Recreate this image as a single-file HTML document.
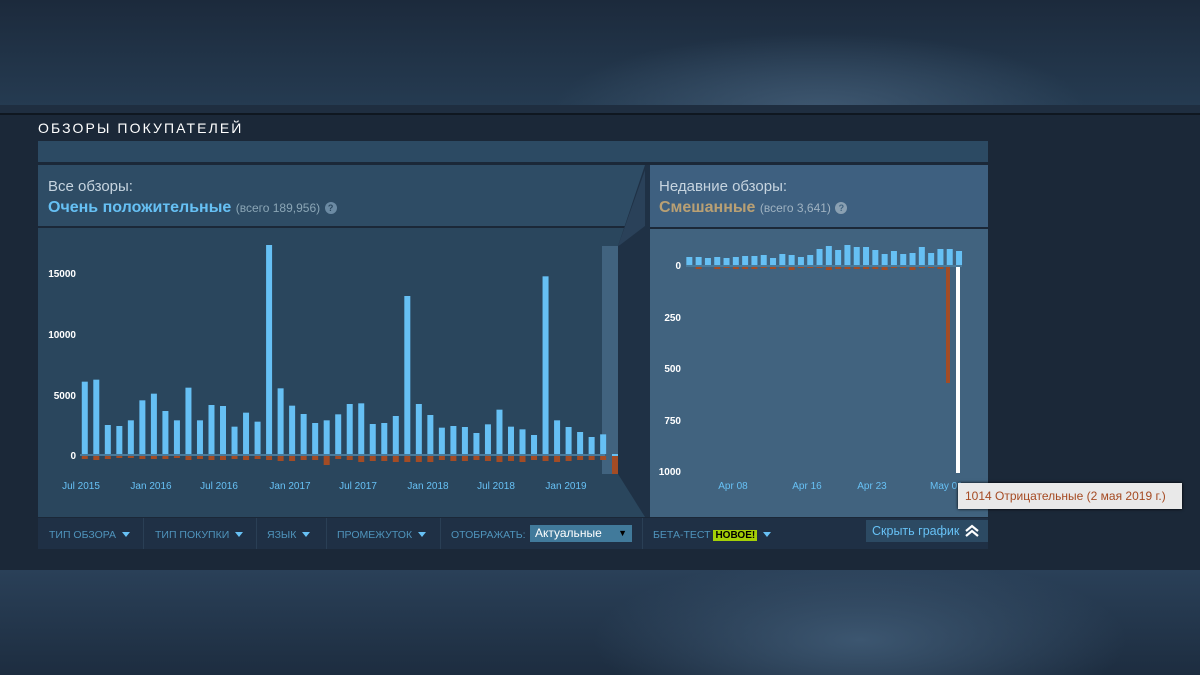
<!DOCTYPE html>
<html><head><meta charset="utf-8"><style>
*{margin:0;padding:0;box-sizing:border-box}
body{width:1200px;height:675px;overflow:hidden;background:#1b2838;font-family:"Liberation Sans",Arial,sans-serif;position:relative}
.a{position:absolute}
#top{left:0;top:0;width:1200px;height:105px;background:radial-gradient(ellipse 380px 110px at 820px 110px,#3e5770,rgba(40,60,80,0) 70%),linear-gradient(180deg,#1c2a3c,#253b51)}
#bot{left:0;top:570px;width:1200px;height:105px;background:radial-gradient(ellipse 380px 120px at 860px 70px,#3c5670,rgba(40,60,80,0) 70%),linear-gradient(180deg,#2a4058,#1d2d40)}
.t{color:#fff;font-size:14px;letter-spacing:2.1px}
.lbl{color:#c6d4df;font-size:15px}
.sm{font-size:12px;color:#8ba6b6}
.q{display:inline-block;width:12px;height:12px;border-radius:50%;background:#6b8aa3;color:#2a475e;font-size:9px;font-weight:bold;text-align:center;line-height:12px;vertical-align:1px}
.f{color:#4f94bc;font-size:10.5px;top:529px}
.tri{display:inline-block;width:0;height:0;border-left:4px solid transparent;border-right:4px solid transparent;border-top:5px solid #67c1f5;margin-left:6px;vertical-align:1px}
.sep{top:518px;width:1px;height:31px;background:#2a3f55}
</style></head><body>
<div class="a" id="top"></div>
<div class="a" style="left:0;top:105px;width:1200px;height:9px;background:#1f2e40"></div>
<div class="a" style="left:0;top:113px;width:1200px;height:2px;background:#0f1720"></div>
<div class="a" id="bot"></div>
<div class="a t" style="left:38px;top:120px">ОБЗОРЫ ПОКУПАТЕЛЕЙ</div>
<div class="a" style="left:38px;top:141px;width:950px;height:21px;background:#2c4a63"></div>
<div class="a" style="left:38px;top:165px;width:607px;height:61px;background:#2e4c65"></div>
<div class="a" style="left:38px;top:228px;width:607px;height:289px;background:#2a465d"></div>
<div class="a lbl" style="left:48px;top:178px">Все обзоры:</div>
<div class="a" style="left:48px;top:199px;font-size:16px;font-weight:bold;color:#66c0f4">Очень положительные <span class="sm" style="font-weight:normal">(всего 189,956)</span> <span class="q">?</span></div>
<div class="a" style="left:650px;top:165px;width:338px;height:62px;background:#3e6080"></div>
<div class="a" style="left:650px;top:229px;width:338px;height:288px;background:#41637f"></div>
<div class="a lbl" style="left:659px;top:178px">Недавние обзоры:</div>
<div class="a" style="left:659px;top:199px;font-size:16px;font-weight:bold;color:#b9a074">Смешанные <span class="sm" style="font-weight:normal;color:#9fb2c1">(всего 3,641)</span> <span class="q" style="background:#8aa0b2;color:#41637f">?</span></div>
<svg class="a" style="left:0;top:0" width="1200" height="675">
<polygon points="645,165 650,165 650,517 645,517 618,474 618,246" fill="#1f3145"/>
<polygon points="618,246 645,170 645,226 620,245" fill="#2a4159"/>
<rect x="602" y="246" width="16" height="228" fill="#41637f"/>
<g id="lb"></g><g id="rb"></g>
<g font-family="Liberation Sans,Arial" font-size="10" fill="#fff" font-weight="bold">
<text x="76" y="277" text-anchor="end">15000</text>
<text x="76" y="338" text-anchor="end">10000</text>
<text x="76" y="399" text-anchor="end">5000</text>
<text x="76" y="459" text-anchor="end">0</text>
<text x="681" y="269" text-anchor="end">0</text>
<text x="681" y="321" text-anchor="end">250</text>
<text x="681" y="372" text-anchor="end">500</text>
<text x="681" y="424" text-anchor="end">750</text>
<text x="681" y="475" text-anchor="end">1000</text>
</g>
<g font-family="Liberation Sans,Arial" font-size="10" fill="#67c1f5">
<text x="81" y="489" text-anchor="middle">Jul 2015</text>
<text x="151" y="489" text-anchor="middle">Jan 2016</text>
<text x="219" y="489" text-anchor="middle">Jul 2016</text>
<text x="290" y="489" text-anchor="middle">Jan 2017</text>
<text x="358" y="489" text-anchor="middle">Jul 2017</text>
<text x="428" y="489" text-anchor="middle">Jan 2018</text>
<text x="496" y="489" text-anchor="middle">Jul 2018</text>
<text x="566" y="489" text-anchor="middle">Jan 2019</text>
<text x="733" y="489" text-anchor="middle">Apr 08</text>
<text x="807" y="489" text-anchor="middle">Apr 16</text>
<text x="872" y="489" text-anchor="middle">Apr 23</text>
<text x="930" y="489">May 01</text>
</g>
</svg>
<div class="a" style="left:38px;top:518px;width:950px;height:31px;background:#1f3045"></div>
<div class="a sep" style="left:143px"></div><div class="a sep" style="left:256px"></div><div class="a sep" style="left:326px"></div><div class="a sep" style="left:440px"></div><div class="a sep" style="left:642px"></div>
<div class="a f" style="left:49px">ТИП ОБЗОРА<span class="tri"></span></div>
<div class="a f" style="left:155px">ТИП ПОКУПКИ<span class="tri"></span></div>
<div class="a f" style="left:267px">ЯЗЫК<span class="tri"></span></div>
<div class="a f" style="left:337px">ПРОМЕЖУТОК<span class="tri"></span></div>
<div class="a f" style="left:451px">ОТОБРАЖАТЬ:</div>
<div class="a" style="left:530px;top:525px;width:102px;height:17px;background:#417a9b;color:#fff;font-size:12px;padding-left:5px;line-height:17px">Актуальные<span style="position:absolute;right:5px;font-size:9px;color:#000">▼</span></div>
<div class="a f" style="left:653px">БЕТА-ТЕСТ <span style="background:#a4d007;color:#000;font-weight:bold;padding:0 2px;font-size:10px">НОВОЕ!</span><span class="tri"></span></div>
<div class="a" style="left:866px;top:520px;width:122px;height:22px;background:#2c4a63;color:#67c1f5;font-size:12.5px;padding:4px 0 0 6px">Скрыть график
<svg class="a" style="right:8px;top:4px" width="16" height="14"><path d="M2 7 L8 2 L14 7 M2 12 L8 7 L14 12" stroke="#fff" stroke-width="2.2" fill="none"/></svg></div>
<div class="a" style="left:958px;top:483px;width:224px;height:26px;background:#e9e9e9;box-shadow:0 0 3px #000;color:#a54a22;font-size:12px;line-height:26px;padding-left:7px">1014 Отрицательные (2 мая 2019 г.)</div>
<script>
var ns="http://www.w3.org/2000/svg";
function r(g,x,y,w,h,c){var e=document.createElementNS(ns,"rect");e.setAttribute("x",x);e.setAttribute("y",y);e.setAttribute("width",w);e.setAttribute("height",h);e.setAttribute("fill",c);g.appendChild(e);}
var tops=[455,449,585,588,571,511,491,543,571,473,571,525,528,590,548,575,45,475,527,552,579,571,553,522,520,582,579,558,198,522,555,593,588,591,609,583,539,590,598,615,139,571,591,606,621,613];
var neg=[3,4,3,2,2,3,3,3,2,4,3,4,4,3,4,3,4,5,5,4,4,9,3,4,6,5,5,6,6,6,6,4,5,5,4,5,6,5,6,4,5,6,5,4,4,4];
var lb=document.getElementById("lb");
r(lb,80,454,525,2,"#4a7a9a");
for(var i=0;i<tops.length;i++){var x=40+(117+i*30.1)/2.613-3;var t=230+tops[i]/3;r(lb,x,t,6,454-t,"#66c0f4");r(lb,x,456,6,neg[i],"#a34c25");}
r(lb,612,454,6,3,"#66c0f4");r(lb,612,456,6,18,"#a34c25");
var rh=[8,8,7,8,7,8,9,9,10,7,11,10,8,10,16,19,15,20,18,18,15,11,14,11,12,18,12,16,16,14];
var rn=[0,2,0,2,1,2,2,2,1,2,1,3,1,1,1,3,2,2,2,2,2,3,1,1,3,1,1,2,0,0];
var rb=document.getElementById("rb");
r(rb,686,265,276,2,"#4a7a9a");
for(var i=0;i<30;i++){var x=600+(268+i*27.9)/3-3;r(rb,x,265-rh[i],6,rh[i],"#66c0f4");if(i<28)r(rb,x,267,6,rn[i],"#a34c25");}
r(rb,946,267,4,116,"#a34c25");
r(rb,956,267,4,206,"#ffffff");
</script>
</body></html>
